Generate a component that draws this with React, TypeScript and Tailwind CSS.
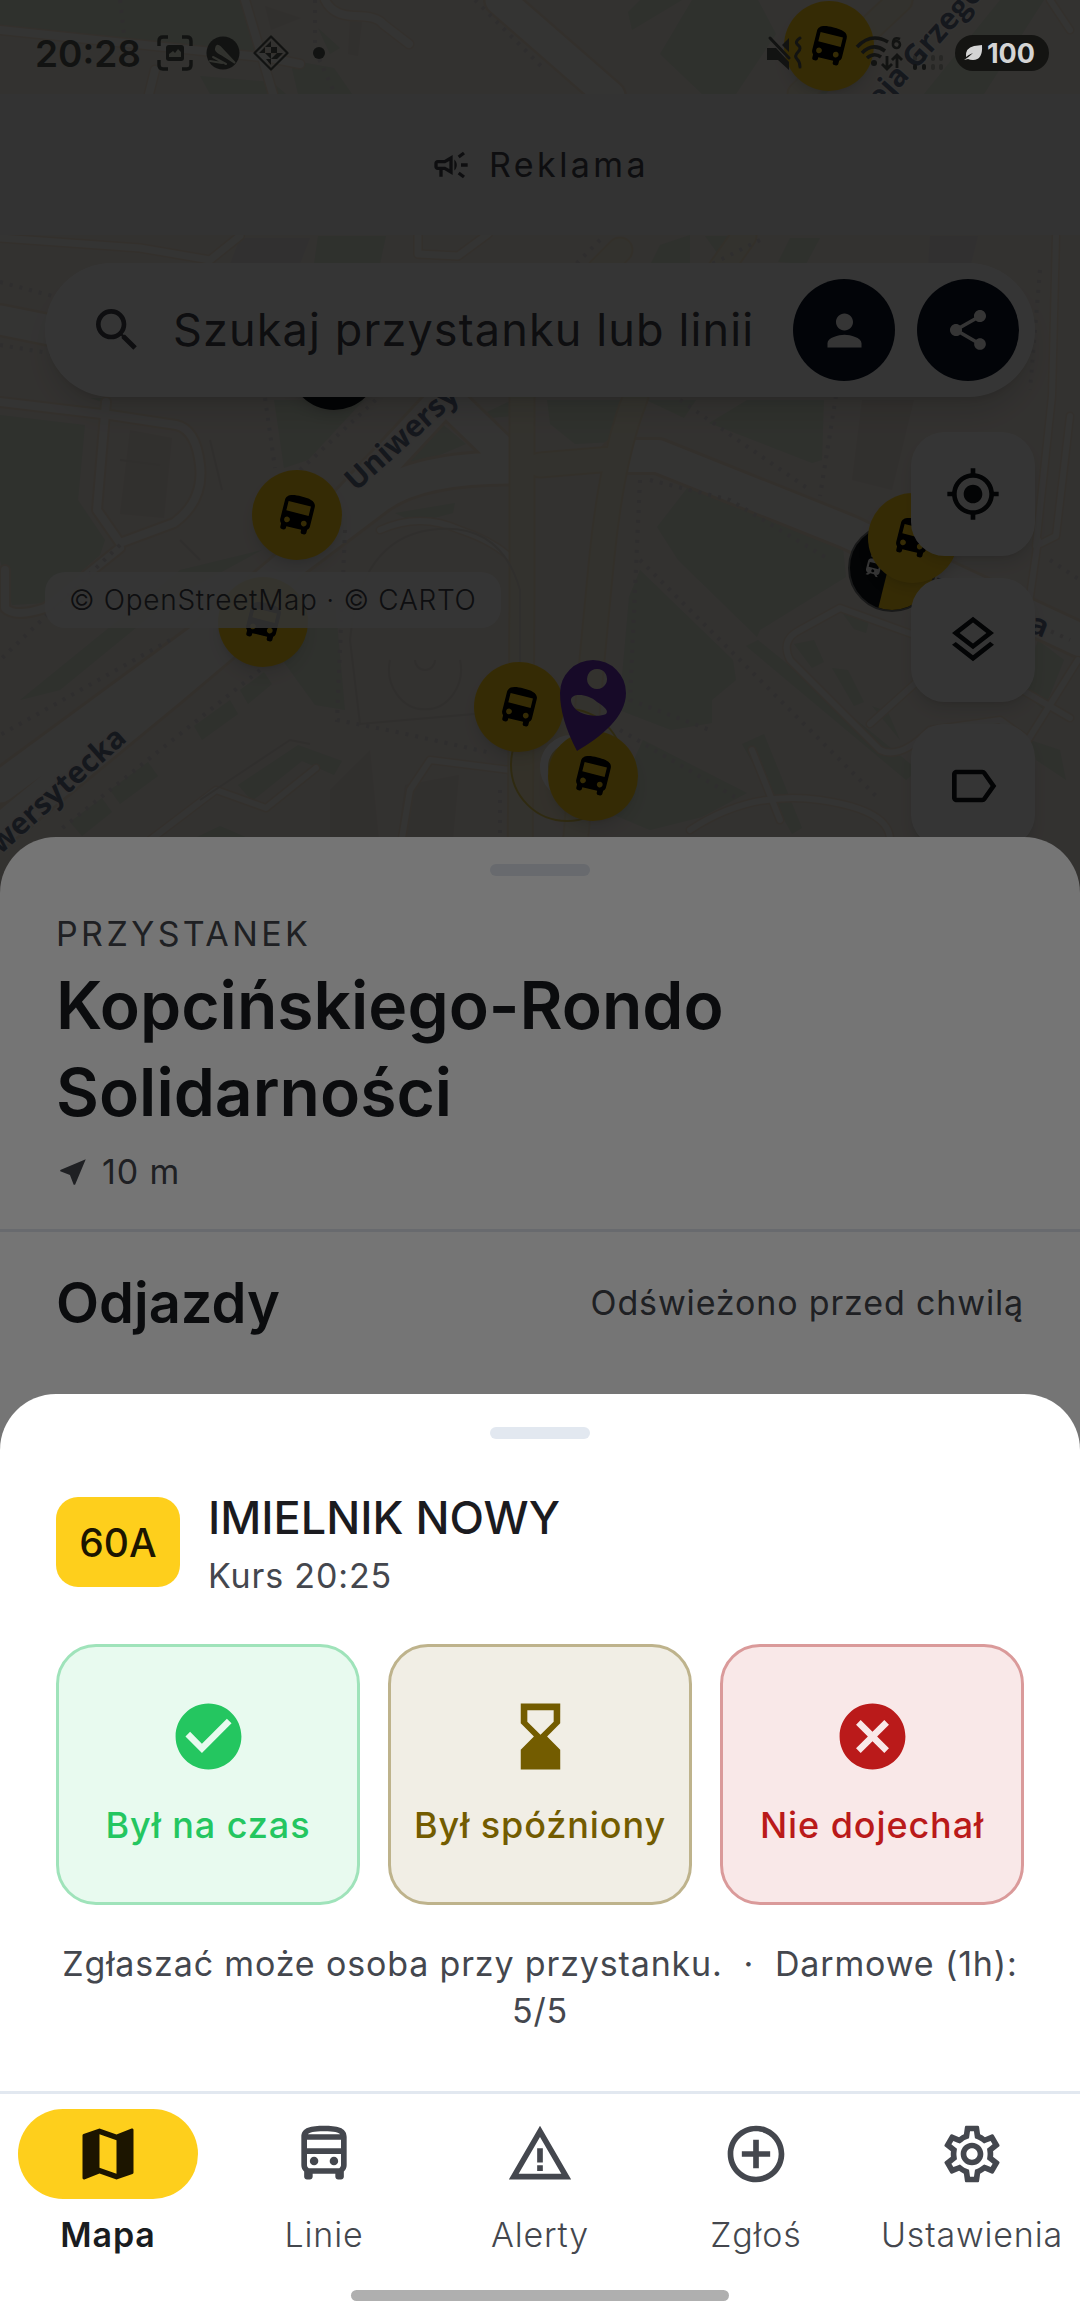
import type { ReactNode } from "react";
import {
  MdAddCircleOutline,
  MdCancel,
  MdCheckCircle,
  MdDirectionsBus,
  MdHourglassBottom,
  MdLabelOutline,
  MdMap,
  MdMyLocation,
  MdNearMe,
  MdOutlineCampaign,
  MdOutlineDirectionsBus,
  MdOutlineLayers,
  MdOutlineSettings,
  MdPerson,
  MdSearch,
  MdShare,
  MdTram,
  MdWarningAmber,
} from "react-icons/md";

function StatusBar() {
  return (
    <div className="relative z-50 flex h-[94px] items-center justify-between pt-3 pr-[31px] pl-[35px] text-[#121312]">
      <div className="flex items-center gap-3">
        <span className="mr-1 text-[37px] leading-none font-semibold">20:28</span>
        <svg className="size-9" viewBox="0 0 36 36" fill="none" stroke="currentColor" strokeWidth="3.4">
          <path d="M2 11V6q0-4 4-4h5M25 2h5q4 0 4 4v5M34 25v5q0 4-4 4h-5M11 34H6q-4 0-4-4v-5" />
          <rect x="9" y="10" width="18" height="16" rx="3" fill="currentColor" stroke="none" />
          <path d="M12 22v-3l4-3 2 2 3-4 3 3v5z" fill="#31322e" stroke="none" />
        </svg>
        <svg className="size-9" viewBox="0 0 36 36">
          <circle cx="18" cy="18" r="16.500" fill="currentColor" />
          <path
            d="M5 26 17 28M8 22l13 7M11 13q1-4 4-1l15 16-14-9q-6-3-5-6z"
            fill="#31322e"
            stroke="#31322e"
            strokeWidth="2"
            strokeLinecap="round"
          />
        </svg>
        <svg className="size-9" viewBox="0 0 36 36" fill="none" stroke="currentColor" strokeWidth="2.2">
          <path d="M18 1.500 34.500 18 18 34.500 1.500 18z" strokeLinejoin="round" />
          <path
            d="M18 6v6h-6zM18 12h6l-6 6zM12 12v6H6zM12 18h6v6zM18 18h6v-6zM30 18h-6v6zM18 24h6v-6zM18 24v6l-5-6z"
            fill="currentColor"
            stroke="none"
          />
        </svg>
        <span className="ml-3 size-3 rounded-full bg-[#121312]" />
      </div>
      <div className="flex items-center">
        <svg className="mr-[52px] h-9 w-9" viewBox="0 0 36 36" fill="none" stroke="currentColor" strokeWidth="3">
          <path d="M0 13h9l13 14v8L11 25H0zM15 10l7-7v14z" fill="currentColor" stroke="none" />
          <path d="m3 3 19 20" strokeLinecap="round" />
          <path d="M33 3q-6 4-2 7t0 7-1 7 3 8" strokeLinecap="round" />
        </svg>
        <svg className="mr-2.5 h-9 w-12" viewBox="0 0 48 36" fill="none" stroke="currentColor" strokeWidth="3.6">
          <path d="M2 12q14-15 31-5M7 18q11-11 23-2M12 23q7-6 14-1" />
          <circle cx="19" cy="28" r="3" fill="currentColor" stroke="none" />
          <path d="M32 21v13m-5-5 5 5 5-5M42 33V20m-5 5 5-5 5 5" strokeWidth="2.8" />
          <path d="M45 4q-7-3-7 5a3.500 3.500 0 1 0 3.500-3q-2 0-3.300 2" strokeWidth="2.6" />
        </svg>
        <svg className="mr-2.5 h-9 w-8" viewBox="0 0 32 36" fill="currentColor">
          <rect y="29" width="4" height="6" rx="2" />
          <rect x="9" y="29" width="4" height="6" rx="2" />
          <g opacity=".35">
            <rect y="20" width="4" height="6" rx="2" />
            <rect x="9" y="20" width="4" height="6" rx="2" />
            <rect x="18" y="20" width="4" height="6" rx="2" />
            <rect x="26" y="20" width="4" height="6" rx="2" />
            <rect x="18" y="29" width="4" height="6" rx="2" />
            <rect x="26" y="29" width="4" height="6" rx="2" />
          </g>
        </svg>
        <div className="flex h-9 items-center gap-1 rounded-full bg-[#141412] pr-3.5 pl-2 text-[#d4d4d4]">
          <svg className="h-4 w-5" viewBox="0 0 20 16" fill="currentColor">
            <path d="M19 0q1 15-9 15-3 0-5-1l-4 1q5-3 9-7-5 2-7 4-1-9 8-11z" />
          </svg>
          <span className="text-[27px] leading-none font-bold">100</span>
        </div>
      </div>
    </div>
  );
}

/* Street map drawn in a 1080 x 880 space. */
function MapCanvas() {
  return (
    <svg className="absolute inset-x-0 top-0 w-full" viewBox="0 0 1080 880" aria-hidden="true">
      <rect width="1080" height="880" fill="#f3ede5" />
      <g fill="#dfe9d6">
        <path d="M0 0h240l18 52L0 26zM200 76l72 6 14 12h-76zM290 60l44 8 18 26h-54zM318 28l22 20-10 6zM318 236h68l-6 28h-66z" />
        <path d="m628 12 12-12h42l-50 30zM692 0h66l18 34-40 60h-34l-42-40zM890 0h24L826 94h-30zM1000 0h44l-60 94h-60z" />
        <path d="m660 245 30-10v30h-40zM705 236h25l-12 18zM778 262l12-24h30l-14 26z" />
        <path d="M0 415l85 10-7 75 27 40-5 15-40 35-15 13-33 2-12-45zM90 398h18v6z" />
        <path d="M274 400h90l-56 60-24 8zM420 440l20-18 26 22-62 26zM395 513l60-10-2 10-38 10z" />
        <path d="M262 550 170 600 60 690 20 700 180 570zM0 795l190-128 30-10L30 830 0 850z" />
        <path d="m275 640 60-40 10 110-30-5-40-55zM240 690l24-18 8 12-24 20zM194 726l36-26 8 14-36 26zM110 790l38-28 10 14-38 28zM70 822l32-24 10 14-30 24zM238 785l60-40 44 16-8 14-32-14-50 40zM470 420l42-20v16z" />
        <path d="M547 400h84l-16 42-40 2-25-20zM709 423l38-23h77l-2 60-10 3zM646 400h50l-12 18z" />
        <path d="m657 527 31-40 155 60 3 30-86 53-3 7-79-77zM640 570l93 90 3 20-24 20v23l-41 7-52-20 10-113z" />
        <path d="m643 740 104 53-45 24-52 13-41-17zM764 734l38 94-10 6-50-90zM758 640l160 130-12 10-160-134z" />
        <path d="m838 607 32 10-4 16-12-4zM794 644l20-4 10 22-12 6zM832 668l16 2 16 32-10 4zM872 706l16 6 12 28zM1038 640l26 20-20 50-24-20zM1030 740l30 10 6 30-30-20zM170 850l50-24 60 26z" />
      </g>
      <g fill="#ece4da">
        <path d="M130 430l42 8-8 80-44-4zM330 790l40-40 10 100h-50zM405 785l54-10-8 85h-56zM862 400h52l-22 90-40-10zM350 20l12 2-4 34-10-2zM265 6l36 12-30 12z" />
        <path d="M240 238h70l-10 26h-70zM930 236h48l-8 32h-42z" fill="#ebe7e4" />
      </g>
      <g fill="none" stroke="#f4e6d2" strokeLinejoin="round" strokeLinecap="round">
        <path d="M0 30 270 58 300 64M245 0l28 94M155 70l-6 24M325 0q8 16 30 16t28 8l26 20" strokeWidth="11" />
        <path d="M0 402l110 13 66 10q20 4 24 40t-26 58l-54 20-23-33 9-108M5 570v38q10 10 40 0l75-60" strokeWidth="12" />
        <path d="M0 238l140 10 70 12 30-24M418 236v18l40 2 30-22" strokeWidth="10" />
        <path d="M500 0l110 96M0 320l60 12" strokeWidth="34" />
        <path d="M0 787 200 640l90-76 90-68q40-28 130-28M0 830l170-140 90-76M290 564l160-172M440 392l68 66" strokeWidth="37" />
        <path d="M618 456h40l190 76 232 108" strokeWidth="38" />
        <path d="M380 530q40-18 80 0 60 20 70 60M150 840l66-50 50 18 50-40M400 850l10-60 20-30 80 10" strokeWidth="9" />
        <path d="M820 690l-30-30q-10-20 10-30l40-22 110 40 120 70M870 724l60-54M820 690l60 60q20 10 50-20l70-10 28 20 50-80M752 750l28 70M690 830q60-40 130-30t70 40" strokeWidth="9" />
        <path d="M1056 236l-4 160-16 150 20-10 14-120M1028 610l10-70M1050 0l20 30" strokeWidth="9" />
      </g>
      <g fill="none" stroke="#f8f6f3" strokeLinejoin="round" strokeLinecap="round">
        <path d="M0 30 270 58 300 64M245 0l28 94M155 70l-6 24M325 0q8 16 30 16t28 8l26 20" strokeWidth="8" />
        <path d="M0 402l110 13 66 10q20 4 24 40t-26 58l-54 20-23-33 9-108M5 570v38q10 10 40 0l75-60" strokeWidth="8" />
        <path d="M0 238l140 10 70 12 30-24M418 236v18l40 2 30-22" strokeWidth="7" />
        <path d="M500 0l110 96M0 320l60 12" strokeWidth="29" />
        <path d="M0 787 200 640l90-76 90-68q40-28 130-28M0 830l170-140 90-76M290 564l160-172M440 392l68 66" strokeWidth="31" />
        <path d="M618 456h40l190 76 232 108" strokeWidth="32" />
        <path d="M380 530q40-18 80 0 60 20 70 60M150 840l66-50 50 18 50-40M400 850l10-60 20-30 80 10" strokeWidth="6" />
        <path d="M820 690l-30-30q-10-20 10-30l40-22 110 40 120 70M870 724l60-54M820 690l60 60q20 10 50-20l70-10 28 20 50-80M752 750l28 70M690 830q60-40 130-30t70 40" strokeWidth="6" />
        <path d="M1056 236l-4 160-16 150 20-10 14-120M1028 610l10-70M1050 0l20 30" strokeWidth="6" />
      </g>
      <g fill="none" stroke="#f3e6cb" strokeLinecap="round">
        <path d="M636 396q-24 60-34 160t-30 324M522 396v200l-2 284M540 465l72-6M800 94 900 0M600 270l20-20M720 270l24-34" strokeWidth="27" />
        <path d="M636 396q-24 60-34 160t-30 324M522 396v200l-2 284M540 465l72-6M800 94 900 0M600 270l20-20M720 270l24-34" strokeWidth="23" stroke="#f5f0d9" />
      </g>
      <g fill="none" stroke="#dedadb" strokeWidth="4" strokeDasharray="3 7">
        <path d="M265 398l10 70M120 545 0 660M300 470l80-74M170 640 0 735M260 670 60 830M345 530l-8 190 60 12 90 20M475 0l70 70M120 0l4 34M315 0v50l20 44M0 282l60 16M0 345l60 10" />
        <path d="M640 480l-10 220 80 30M650 480l80 20 100 60M680 400l130 90M836 396l-16 100M640 560l240 240M500 790v60M760 240l-60 30M620 730l120 70M1050 560l30 20M1040 270l-10 120M960 590l110 50M600 240l-30 30" />
      </g>
      <g fill="none" stroke="#e6dfd7" strokeWidth="2">
        <path d="M350 640q10-100 80-110t90 60v120l-160 14zM390 660a36 40 0 1 0 70 0M415 660a10 10 0 1 0 20 0" />
        <path d="M120 460l40 5M180 540l20 20M210 440l12 50M200 800l90-60 20 4" />
      </g>
      <g fill="#68738f" fontFamily="'Open Sans', 'Noto Sans', sans-serif" fontSize="30" fontWeight="700" stroke="#f7f3ee" strokeWidth="3" paintOrder="stroke">
        <text transform="translate(356 492) rotate(-42)">Uniwersytecka</text>
        <text transform="translate(128 740) rotate(-42)" textAnchor="end">Uniwersytecka</text>
        <text transform="translate(862 130) rotate(-48)">aleja Grzegorza</text>
        <text transform="translate(1044 638) rotate(22)" textAnchor="end">Narutowicza</text>
      </g>
    </svg>
  );
}

function BusMarker({ place }: { place: string }) {
  return (
    <div className={`absolute flex size-[90px] items-center justify-center rounded-full bg-[#fecf1c] text-black shadow-lg ${place}`}>
      <MdDirectionsBus className="size-[46px] rotate-[14deg]" />
    </div>
  );
}

function MapPins() {
  return (
    <div className="absolute inset-0">
      <BusMarker place="left-[784px] top-[1px]" />
      <div className="absolute top-[320px] left-[289px] size-[90px] rounded-full bg-[#101418] shadow-lg" />
      <BusMarker place="left-[252px] top-[470px]" />
      <BusMarker place="left-[218px] top-[577px]" />
      <div className="absolute top-[708px] left-[510px] size-[114px] rounded-full border-2 border-[#e3cb55] bg-[#fecf1c]/10" />
      <BusMarker place="left-[474px] top-[662px]" />
      <div className="absolute top-[735px] left-[540px] size-[64px] rounded-full border-8 border-white bg-[#e8d27a]" />
      <BusMarker place="left-[548px] top-[731px]" />
      <svg className="absolute top-[659px] left-[559px] h-[93px] w-[68px]" viewBox="0 0 68 93">
        <path
          fill="#6d34c0"
          fillRule="evenodd"
          d="M18 92Q1 60 1 34A33 33 0 0 1 67 34C67 58 42 78 18 92zM38 10a10 10 0 1 0 .1 0zM12 42c-1-8 16-8 26 1 8 5 12 9 9 12-8 4-32 2-35-13z"
        />
      </svg>
      <div className="absolute top-[524px] left-[848px] size-[88px] overflow-hidden rounded-full border-2 border-[#77797a] bg-[#101418]">
        <div className="absolute -top-4 left-[38px] h-32 w-20 rotate-[14deg] bg-[#fecf1c]" />
        <MdTram className="absolute top-7 left-3 size-6 rotate-[14deg] text-white" />
      </div>
      <BusMarker place="left-[868px] top-[493px]" />
    </div>
  );
}

function AdBanner() {
  return (
    <div className="relative flex h-[141px] items-center justify-center gap-[18px] bg-[#f1f1f1] text-[#44474e]">
      <MdOutlineCampaign className="size-10" />
      <span className="text-[34px] leading-[44px] tracking-widest">Reklama</span>
    </div>
  );
}

function SearchBar() {
  return (
    <form className="relative mx-[45px] mt-7 flex h-[134px] items-center rounded-full bg-white pr-4 pl-11 shadow-xl" onSubmit={(e) => e.preventDefault()}>
      <MdSearch className="size-14 shrink-0 text-[#44474e]" />
      <input
        type="search"
        aria-label="Szukaj przystanku lub linii"
        placeholder="Szukaj przystanku lub linii"
        className="ml-7 min-w-0 flex-1 bg-transparent text-[45px] leading-[60px] tracking-wide text-[#44474e] outline-none placeholder:text-[#44474e]"
      />
      <div className="flex gap-[22px]">
        <button type="button" aria-label="Konto" className="flex size-[102px] items-center justify-center rounded-full bg-[#0f172a] text-white">
          <MdPerson className="size-[51px]" />
        </button>
        <button type="button" aria-label="Udostępnij" className="flex size-[102px] items-center justify-center rounded-full bg-[#0f172a] text-white">
          <MdShare className="size-12" />
        </button>
      </div>
    </form>
  );
}

function MapButton({ label, children }: { label: string; children: ReactNode }) {
  return (
    <button type="button" aria-label={label} className="flex size-[124px] items-center justify-center rounded-[34px] bg-white text-[#101418] shadow-lg">
      {children}
    </button>
  );
}

function StopSheet() {
  return (
    <section className="relative z-20 -mt-[11px] flex flex-1 flex-col rounded-t-[56px] bg-white pt-[27px] text-[#191c20]">
      <div className="mx-auto h-3 w-[100px] rounded-full bg-[#e2e8f0]" />
      <div className="mt-[34px] border-b-[3px] border-[#e2e8f0] px-14 pb-[33px]">
        <p className="text-[34px] leading-[48px] tracking-widest text-[#44474e]">PRZYSTANEK</p>
        <h1 className="mt-1 max-w-[760px] text-[66px] leading-[87px] font-semibold">Kopcińskiego-Rondo Solidarności</h1>
        <p className="mt-3 flex items-center gap-3 text-[34px] leading-[48px] text-[#44474e]">
          <MdNearMe className="size-[34px]" />
          <span className="tracking-wide">10 m</span>
        </p>
      </div>
      <div className="mt-[37px] flex items-center justify-between px-14">
        <h2 className="text-[56px] leading-[68px] font-semibold">Odjazdy</h2>
        <span className="text-[34px] leading-[48px] tracking-wide text-[#44474e]">Odświeżono przed chwilą</span>
      </div>
    </section>
  );
}

const reports = [
  { label: "Był na czas", Icon: MdCheckCircle, style: "border-[#9fe3ba] bg-[#e8faef] text-[#24c660]" },
  { label: "Był spóźniony", Icon: MdHourglassBottom, style: "border-[#beb38c] bg-[#f1eee5] text-[#735c00]" },
  { label: "Nie dojechał", Icon: MdCancel, style: "border-[#da9a9a] bg-[#f9e8e8] text-[#ba1a1a]" },
];

const hint = "Zgłaszać może osoba przy przystanku.\u00a0 · \u00a0Darmowe (1h): 5/5";

function ReportDialog() {
  return (
    <section role="dialog" aria-label="Zgłoszenie kursu" className="absolute inset-x-0 bottom-0 z-40 rounded-t-[56px] bg-white px-14 pt-[33px] pb-[57px] text-[#1b1b1f]">
      <div className="mx-auto h-3 w-[100px] rounded-full bg-[#e2e8f0]" />
      <div className="mt-[49px] flex items-center gap-7">
        <span className="flex h-[90px] w-[124px] items-center justify-center rounded-[22px] bg-[#fecf1c] text-[39px] leading-none font-medium text-[#1c1500]">60A</span>
        <div>
          <h2 className="text-[45px] leading-[60px] font-medium">IMIELNIK NOWY</h2>
          <p className="mt-2 text-[34px] leading-[40px] tracking-wide text-[#44474e]">Kurs 20:25</p>
        </div>
      </div>
      <div className="mt-12 grid grid-cols-3 gap-7">
        {reports.map(({ label, Icon, style }) => (
          <button key={label} type="button" className={`flex flex-col items-center rounded-[40px] border-[3px] pt-[50px] pb-[55px] ${style}`}>
            <Icon className="size-[79px]" />
            <span className="mt-[27px] text-[36px] leading-[44px] font-medium tracking-wide whitespace-nowrap">{label}</span>
          </button>
        ))}
      </div>
      <p className="mt-[35px] text-center text-[34px] leading-[47px] tracking-wide text-[#44474e]">{hint}</p>
    </section>
  );
}

const tabs = [
  { label: "Mapa", Icon: MdMap, pill: "bg-[#fecf1c] text-[#1c1500]", text: "font-semibold text-[#191c20]" },
  { label: "Linie", Icon: MdOutlineDirectionsBus, pill: "", text: "font-light" },
  { label: "Alerty", Icon: MdWarningAmber, pill: "", text: "font-light" },
  { label: "Zgłoś", Icon: MdAddCircleOutline, pill: "", text: "font-light" },
  { label: "Ustawienia", Icon: MdOutlineSettings, pill: "", text: "font-light" },
];

function BottomNav() {
  return (
    <nav className="border-t-[3px] border-[#e2e8f0] bg-white pt-[15px] pb-[15px]">
      <div className="grid grid-cols-5">
        {tabs.map(({ label, Icon, pill, text }) => (
          <button key={label} type="button" className="flex flex-col items-center text-[#44474e]">
            <span className={`flex h-[90px] w-[180px] items-center justify-center rounded-full ${pill}`}>
              <Icon className="size-[68px]" />
            </span>
            <span className={`mt-3.5 text-[34px] leading-[44px] tracking-wide ${text}`}>{label}</span>
          </button>
        ))}
      </div>
      <div className="mx-auto mt-[33px] h-[11px] w-[378px] rounded-full bg-[#afafaf]" />
    </nav>
  );
}

export default function App() {
  return (
    <div className="flex min-h-screen flex-col bg-white font-['Inter',sans-serif]">
      <main className="relative flex flex-1 flex-col overflow-hidden bg-[#f3ede5]">
        <MapCanvas />
        <MapPins />
        <StatusBar />
        <AdBanner />
        <SearchBar />
        <div className="relative mx-[45px] mt-[35px] flex items-start justify-between">
          <p className="mt-[140px] rounded-[20px] bg-white/85 px-6 py-1.5 text-[28px] leading-[44px] font-light tracking-wide text-[#44474e]">
            © OpenStreetMap · © CARTO
          </p>
          <div className="flex flex-col gap-[22px]">
            <MapButton label="Moja lokalizacja">
              <MdMyLocation className="size-14" />
            </MapButton>
            <MapButton label="Warstwy">
              <MdOutlineLayers className="size-14" />
            </MapButton>
            <MapButton label="Etykiety">
              <MdLabelOutline className="size-14" />
            </MapButton>
          </div>
        </div>
        <div className="absolute inset-0 z-10 bg-black/54" />
        <StopSheet />
        <div className="absolute inset-0 z-30 bg-black/54" />
        <ReportDialog />
      </main>
      <BottomNav />
    </div>
  );
}
